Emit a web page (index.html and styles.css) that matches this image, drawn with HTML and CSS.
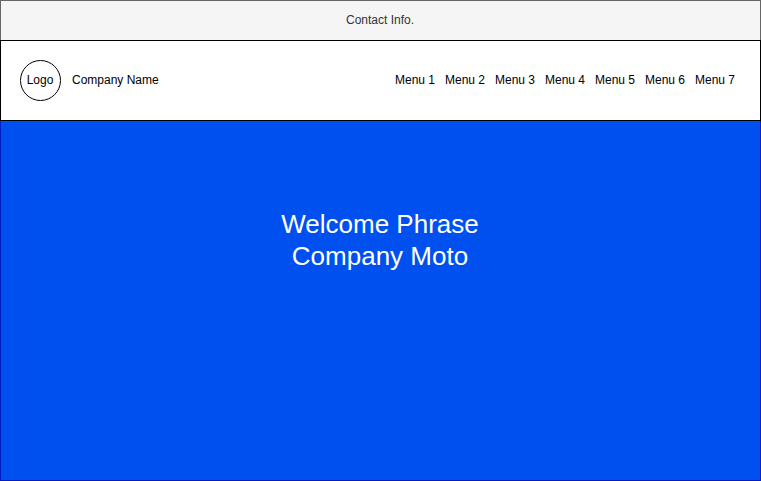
FILE: index.html
```html
<!DOCTYPE html>
<html lang="en">
<head>
<meta charset="utf-8">
<title>Company Name</title>
<link rel="stylesheet" href="styles.css">
</head>
<body>
<div class="contact">Contact Info.</div>
<header class="header">
  <div class="logo">
    <svg class="logo-ring" width="41" height="41" viewBox="0 0 41 41"><circle cx="20.5" cy="20.5" r="20" fill="#fff" stroke="#000"/></svg>
    <span class="logo-text">Logo</span>
  </div>
  <div class="name">Company Name</div>
  <nav class="menu">
    <a>Menu 1</a><a>Menu 2</a><a>Menu 3</a><a>Menu 4</a><a>Menu 5</a><a>Menu 6</a><a>Menu 7</a>
  </nav>
</header>
<main class="hero">
  <h1 class="phrase">Welcome Phrase<br>Company Moto</h1>
</main>
</body>
</html>
```

FILE: styles.css
```css
* { box-sizing: border-box; }
body {
  margin: 0;
  height: 481px;
  display: flex;
  flex-direction: column;
  overflow: hidden;
  font: 12px/14px "Liberation Sans", Arial, sans-serif;
  color: #000;
}
.contact {
  height: 40px;
  border: 1px solid #666;
  border-bottom: 0;
  background: #f5f5f5;
  color: #333;
  text-align: center;
  padding: 12px 1px 0 0;
}
.header {
  height: 81px;
  border: 1px solid #000;
  background: #fff;
  display: flex;
  align-items: center;
  padding: 0 20px 0 19px;
}
.logo {
  display: grid;
  place-items: center;
  width: 41px;
  height: 41px;
}
.logo-ring, .logo-text { grid-area: 1 / 1; }
.logo-ring { display: block; }
.logo-text { padding: 0 1px 1px 0; }
.name { margin-left: 11px; padding-bottom: 1px; }
.menu { margin-left: auto; display: flex; padding-bottom: 1px; }
.menu a { width: 50px; text-align: center; white-space: nowrap; }
.hero {
  flex: 1;
  border: 1px solid #001dbc;
  border-top: 0;
  background: #0050ef;
  color: #fff;
  text-align: center;
  padding: 87px 1px 0 0;
}
.phrase { margin: 0; font-size: 26px; line-height: 32px; font-weight: 400; }
```
